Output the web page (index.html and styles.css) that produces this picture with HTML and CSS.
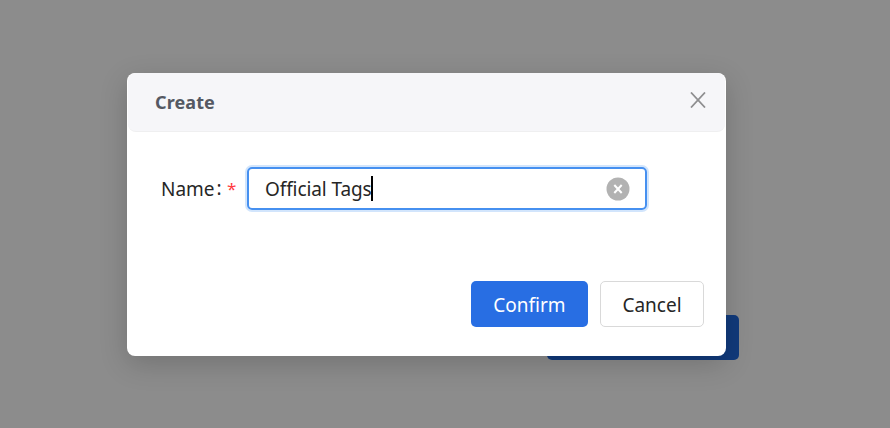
FILE: index.html
```
<!DOCTYPE html>
<html lang="en">
<head>
    <meta charset="UTF-8">
    <meta name="viewport" content="width=device-width, initial-scale=1.0">
    <title>Create</title>
    <link rel="stylesheet" href="styles.css">
</head>
<body>
    <div class="page-button"></div>
    <div class="mask"></div>
    <div class="modal">
        <div class="modal-header">
            <span class="modal-title">Create</span>
            <svg class="close" width="16" height="16" viewBox="0 0 16 16">
                <path d="M1 0.5L15 15.5M15 0.5L1 15.5" fill="none" stroke="#8e8e90" stroke-width="1.8"/>
            </svg>
        </div>
        <div class="modal-body">
            <span class="label">Name<span class="colon">:</span></span>
            <span class="required">*</span>
            <div class="input">
                <span class="value">Official Tags</span>
                <span class="caret"></span>
                <svg class="clear" width="24" height="24" viewBox="0 0 24 24">
                    <circle cx="12" cy="12" r="11.5" fill="#b2b2b2"/>
                    <path d="M8.3 8L15.7 16M15.7 8L8.3 16" fill="none" stroke="#fff" stroke-width="2"/>
                </svg>
            </div>
        </div>
        <div class="modal-footer">
            <button class="confirm">Confirm</button>
            <button class="cancel">Cancel</button>
        </div>
    </div>
</body>
</html>
```
FILE: styles.css
```
* {
    box-sizing: border-box;
}
body {
    margin: 0;
    height: 428px;
    padding: 73px 0 0 127px;
    position: relative;
    overflow: hidden;
    background-color: #fff;
    font-family: 'Noto Sans', 'Open Sans', sans-serif;
    font-size: 19px;
    font-weight: 400;
    color: #262626;
}
.page-button {
    position: absolute;
    left: 547px;
    top: 315px;
    width: 192px;
    height: 45px;
    border-radius: 5px;
    background-color: #206be1;
}
.mask {
    position: absolute;
    left: 0;
    top: 0;
    width: 100%;
    height: 100%;
    background-color: rgba(0, 0, 0, 0.45);
}
/* Modal */
.modal {
    position: relative;
    width: 599px;
    height: 283px;
    display: flex;
    flex-direction: column;
    background-color: #fff;
    border-radius: 8px;
    box-shadow: 0 8px 28px rgba(0, 0, 0, 0.18);
}
.modal-header {
    height: 59px;
    display: flex;
    align-items: center;
    justify-content: space-between;
    margin: 0 1px;
    padding: 0 19px 4px 27px;
    background-color: #f6f6f9;
    border-bottom: 1px solid #efeff0;
    border-radius: 8px;
}
.modal-title {
    padding-top: 4px;
    font-size: 18px;
    font-weight: 700;
    letter-spacing: 0.1px;
    color: #555963;
}
.close {
    display: block;
}
.modal-body {
    display: flex;
    align-items: center;
    padding: 35px 0 0 34px;
}
.label {
    width: 66px;
    white-space: nowrap;
}
.colon {
    position: relative;
    top: -1px;
    margin-left: 2px;
}
.required {
    width: 20px;
    font-size: 17px;
    color: #ff3b3f;
}
.input {
    width: 400px;
    height: 43px;
    display: flex;
    align-items: center;
    padding: 0 15px 0 16px;
    border: 2px solid #4690f0;
    border-radius: 5px;
    box-shadow: 0 0 0 2px #d2e5fc;
}
.value {
    white-space: nowrap;
    letter-spacing: -0.1px;
}
.caret {
    width: 2px;
    height: 25px;
    margin-left: -1px;
    background-color: #000;
}
.clear {
    margin-left: auto;
}
.modal-footer {
    display: flex;
    justify-content: flex-end;
    gap: 12px;
    margin-top: 71px;
    padding-right: 22px;
}
button {
    height: 46px;
    padding: 1px 0 0;
    font-family: inherit;
    font-size: 19px;
    font-weight: 400;
    border-radius: 5px;
    cursor: pointer;
}
.confirm {
    width: 117px;
    border: none;
    background-color: #286ee3;
    color: #fff;
}
.cancel {
    width: 104px;
    border: 1px solid #d9d9d9;
    background-color: #fff;
    color: #262626;
}
```
